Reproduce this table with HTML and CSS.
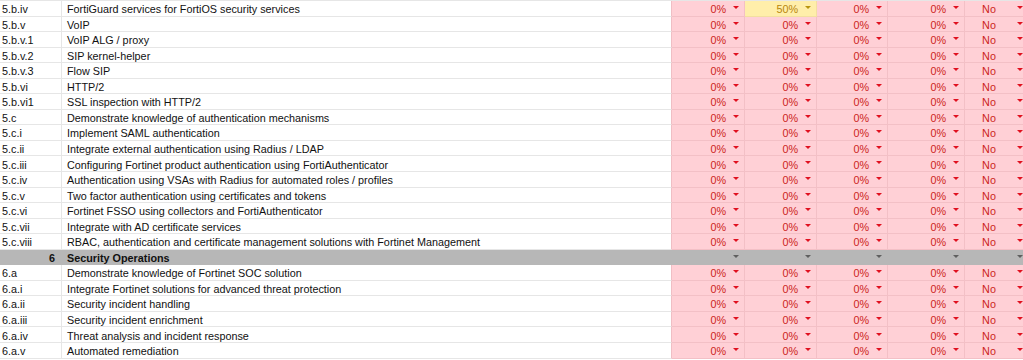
FILE: index.html
```html
<!DOCTYPE html>
<html lang="en">
<head>
    <meta charset="UTF-8">
    <title>Exam Objectives Tracker</title>
    <link rel="stylesheet" href="styles.css">
</head>
<body>
    <div class="sheet">
        <div class="row"><div class="cell code">5.b.iv</div><div class="cell topic">FortiGuard services for FortiOS security services</div><div class="cell pick"><span>0%</span><i class="caret"></i></div><div class="cell pick half"><span>50%</span><i class="caret"></i></div><div class="cell pick"><span>0%</span><i class="caret"></i></div><div class="cell pick"><span>0%</span><i class="caret"></i></div><div class="cell pick yn"><span>No</span><i class="caret"></i></div></div>
        <div class="row"><div class="cell code">5.b.v</div><div class="cell topic">VoIP</div><div class="cell pick"><span>0%</span><i class="caret"></i></div><div class="cell pick"><span>0%</span><i class="caret"></i></div><div class="cell pick"><span>0%</span><i class="caret"></i></div><div class="cell pick"><span>0%</span><i class="caret"></i></div><div class="cell pick yn"><span>No</span><i class="caret"></i></div></div>
        <div class="row"><div class="cell code">5.b.v.1</div><div class="cell topic">VoIP ALG / proxy</div><div class="cell pick"><span>0%</span><i class="caret"></i></div><div class="cell pick"><span>0%</span><i class="caret"></i></div><div class="cell pick"><span>0%</span><i class="caret"></i></div><div class="cell pick"><span>0%</span><i class="caret"></i></div><div class="cell pick yn"><span>No</span><i class="caret"></i></div></div>
        <div class="row"><div class="cell code">5.b.v.2</div><div class="cell topic">SIP kernel-helper</div><div class="cell pick"><span>0%</span><i class="caret"></i></div><div class="cell pick"><span>0%</span><i class="caret"></i></div><div class="cell pick"><span>0%</span><i class="caret"></i></div><div class="cell pick"><span>0%</span><i class="caret"></i></div><div class="cell pick yn"><span>No</span><i class="caret"></i></div></div>
        <div class="row"><div class="cell code">5.b.v.3</div><div class="cell topic">Flow SIP</div><div class="cell pick"><span>0%</span><i class="caret"></i></div><div class="cell pick"><span>0%</span><i class="caret"></i></div><div class="cell pick"><span>0%</span><i class="caret"></i></div><div class="cell pick"><span>0%</span><i class="caret"></i></div><div class="cell pick yn"><span>No</span><i class="caret"></i></div></div>
        <div class="row"><div class="cell code">5.b.vi</div><div class="cell topic">HTTP/2</div><div class="cell pick"><span>0%</span><i class="caret"></i></div><div class="cell pick"><span>0%</span><i class="caret"></i></div><div class="cell pick"><span>0%</span><i class="caret"></i></div><div class="cell pick"><span>0%</span><i class="caret"></i></div><div class="cell pick yn"><span>No</span><i class="caret"></i></div></div>
        <div class="row"><div class="cell code">5.b.vi1</div><div class="cell topic">SSL inspection with HTTP/2</div><div class="cell pick"><span>0%</span><i class="caret"></i></div><div class="cell pick"><span>0%</span><i class="caret"></i></div><div class="cell pick"><span>0%</span><i class="caret"></i></div><div class="cell pick"><span>0%</span><i class="caret"></i></div><div class="cell pick yn"><span>No</span><i class="caret"></i></div></div>
        <div class="row"><div class="cell code">5.c</div><div class="cell topic">Demonstrate knowledge of authentication mechanisms</div><div class="cell pick"><span>0%</span><i class="caret"></i></div><div class="cell pick"><span>0%</span><i class="caret"></i></div><div class="cell pick"><span>0%</span><i class="caret"></i></div><div class="cell pick"><span>0%</span><i class="caret"></i></div><div class="cell pick yn"><span>No</span><i class="caret"></i></div></div>
        <div class="row"><div class="cell code">5.c.i</div><div class="cell topic">Implement SAML authentication</div><div class="cell pick"><span>0%</span><i class="caret"></i></div><div class="cell pick"><span>0%</span><i class="caret"></i></div><div class="cell pick"><span>0%</span><i class="caret"></i></div><div class="cell pick"><span>0%</span><i class="caret"></i></div><div class="cell pick yn"><span>No</span><i class="caret"></i></div></div>
        <div class="row"><div class="cell code">5.c.ii</div><div class="cell topic">Integrate external authentication using Radius / LDAP</div><div class="cell pick"><span>0%</span><i class="caret"></i></div><div class="cell pick"><span>0%</span><i class="caret"></i></div><div class="cell pick"><span>0%</span><i class="caret"></i></div><div class="cell pick"><span>0%</span><i class="caret"></i></div><div class="cell pick yn"><span>No</span><i class="caret"></i></div></div>
        <div class="row"><div class="cell code">5.c.iii</div><div class="cell topic">Configuring Fortinet product authentication using FortiAuthenticator</div><div class="cell pick"><span>0%</span><i class="caret"></i></div><div class="cell pick"><span>0%</span><i class="caret"></i></div><div class="cell pick"><span>0%</span><i class="caret"></i></div><div class="cell pick"><span>0%</span><i class="caret"></i></div><div class="cell pick yn"><span>No</span><i class="caret"></i></div></div>
        <div class="row"><div class="cell code">5.c.iv</div><div class="cell topic">Authentication using VSAs with Radius for automated roles / profiles</div><div class="cell pick"><span>0%</span><i class="caret"></i></div><div class="cell pick"><span>0%</span><i class="caret"></i></div><div class="cell pick"><span>0%</span><i class="caret"></i></div><div class="cell pick"><span>0%</span><i class="caret"></i></div><div class="cell pick yn"><span>No</span><i class="caret"></i></div></div>
        <div class="row"><div class="cell code">5.c.v</div><div class="cell topic">Two factor authentication using certificates and tokens</div><div class="cell pick"><span>0%</span><i class="caret"></i></div><div class="cell pick"><span>0%</span><i class="caret"></i></div><div class="cell pick"><span>0%</span><i class="caret"></i></div><div class="cell pick"><span>0%</span><i class="caret"></i></div><div class="cell pick yn"><span>No</span><i class="caret"></i></div></div>
        <div class="row"><div class="cell code">5.c.vi</div><div class="cell topic">Fortinet FSSO using collectors and FortiAuthenticator</div><div class="cell pick"><span>0%</span><i class="caret"></i></div><div class="cell pick"><span>0%</span><i class="caret"></i></div><div class="cell pick"><span>0%</span><i class="caret"></i></div><div class="cell pick"><span>0%</span><i class="caret"></i></div><div class="cell pick yn"><span>No</span><i class="caret"></i></div></div>
        <div class="row"><div class="cell code">5.c.vii</div><div class="cell topic">Integrate with AD certificate services</div><div class="cell pick"><span>0%</span><i class="caret"></i></div><div class="cell pick"><span>0%</span><i class="caret"></i></div><div class="cell pick"><span>0%</span><i class="caret"></i></div><div class="cell pick"><span>0%</span><i class="caret"></i></div><div class="cell pick yn"><span>No</span><i class="caret"></i></div></div>
        <div class="row"><div class="cell code">5.c.viii</div><div class="cell topic">RBAC, authentication and certificate management solutions with Fortinet Management</div><div class="cell pick"><span>0%</span><i class="caret"></i></div><div class="cell pick"><span>0%</span><i class="caret"></i></div><div class="cell pick"><span>0%</span><i class="caret"></i></div><div class="cell pick"><span>0%</span><i class="caret"></i></div><div class="cell pick yn"><span>No</span><i class="caret"></i></div></div>
        <div class="row section"><div class="cell code">6</div><div class="cell topic">Security Operations</div><div class="cell pick"><span></span><i class="caret"></i></div><div class="cell pick"><span></span><i class="caret"></i></div><div class="cell pick"><span></span><i class="caret"></i></div><div class="cell pick"><span></span><i class="caret"></i></div><div class="cell pick yn"><span></span><i class="caret"></i></div></div>
        <div class="row"><div class="cell code">6.a</div><div class="cell topic">Demonstrate knowledge of Fortinet SOC solution</div><div class="cell pick"><span>0%</span><i class="caret"></i></div><div class="cell pick"><span>0%</span><i class="caret"></i></div><div class="cell pick"><span>0%</span><i class="caret"></i></div><div class="cell pick"><span>0%</span><i class="caret"></i></div><div class="cell pick yn"><span>No</span><i class="caret"></i></div></div>
        <div class="row"><div class="cell code">6.a.i</div><div class="cell topic">Integrate Fortinet solutions for advanced threat protection</div><div class="cell pick"><span>0%</span><i class="caret"></i></div><div class="cell pick"><span>0%</span><i class="caret"></i></div><div class="cell pick"><span>0%</span><i class="caret"></i></div><div class="cell pick"><span>0%</span><i class="caret"></i></div><div class="cell pick yn"><span>No</span><i class="caret"></i></div></div>
        <div class="row"><div class="cell code">6.a.ii</div><div class="cell topic">Security incident handling</div><div class="cell pick"><span>0%</span><i class="caret"></i></div><div class="cell pick"><span>0%</span><i class="caret"></i></div><div class="cell pick"><span>0%</span><i class="caret"></i></div><div class="cell pick"><span>0%</span><i class="caret"></i></div><div class="cell pick yn"><span>No</span><i class="caret"></i></div></div>
        <div class="row"><div class="cell code">6.a.iii</div><div class="cell topic">Security incident enrichment</div><div class="cell pick"><span>0%</span><i class="caret"></i></div><div class="cell pick"><span>0%</span><i class="caret"></i></div><div class="cell pick"><span>0%</span><i class="caret"></i></div><div class="cell pick"><span>0%</span><i class="caret"></i></div><div class="cell pick yn"><span>No</span><i class="caret"></i></div></div>
        <div class="row"><div class="cell code">6.a.iv</div><div class="cell topic">Threat analysis and incident response</div><div class="cell pick"><span>0%</span><i class="caret"></i></div><div class="cell pick"><span>0%</span><i class="caret"></i></div><div class="cell pick"><span>0%</span><i class="caret"></i></div><div class="cell pick"><span>0%</span><i class="caret"></i></div><div class="cell pick yn"><span>No</span><i class="caret"></i></div></div>
        <div class="row"><div class="cell code">6.a.v</div><div class="cell topic">Automated remediation</div><div class="cell pick"><span>0%</span><i class="caret"></i></div><div class="cell pick"><span>0%</span><i class="caret"></i></div><div class="cell pick"><span>0%</span><i class="caret"></i></div><div class="cell pick"><span>0%</span><i class="caret"></i></div><div class="cell pick yn"><span>No</span><i class="caret"></i></div></div>
    </div>
</body>
</html>
```
FILE: styles.css
```css
body {
    margin: 0;
    background: #ffffff;
    font-family: "Liberation Sans", Arial, sans-serif;
    font-size: 10.8px;
    color: #111111;
    overflow: hidden;
}
.sheet {
    width: 1023px;
    overflow: hidden;
    border-top: 1px solid #e6e6e6;
}
.row {
    display: grid;
    grid-template-columns: 62px 610px 73px 72px 71px 77px 64px;
    height: 15.56px;
}
.cell {
    box-sizing: border-box;
    border-right: 1px solid #e6e6e6;
    border-bottom: 1px solid #e6e6e6;
    line-height: 12px;
    padding-bottom: 0.5px;
    white-space: nowrap;
    overflow: hidden;
    display: flex;
    align-items: flex-end;
}
.code {
    padding-left: 2px;
}
.topic {
    padding-left: 5px;
    border-right-color: #f0bec4;
}
.pick {
    background: #ffd0d6;
    color: #cc1f1a;
    border-color: #f3c0c6;
    justify-content: flex-end;
    padding-right: 5px;
}
.pick span {
    margin-right: 7px;
}
.caret {
    align-self: center;
    width: 0;
    height: 0;
    border-left: 3px solid transparent;
    border-right: 3px solid transparent;
    border-top: 3px solid #e0101f;
    margin-bottom: 1px;
}
.pick.half {
    background: #ffeeaa;
    color: #b8860b;
    border-color: #f3dfa0;
}
.pick.half .caret {
    border-top-color: #b8940f;
}
.pick.yn {
    justify-content: space-between;
}
.pick.yn span {
    flex: 1;
    text-align: center;
    margin-right: 4px;
}
.section .cell {
    background: #b7b7b7;
    border-color: #b7b7b7;
    font-weight: bold;
}
.section .code {
    justify-content: flex-end;
    padding-right: 6px;
}
.section .caret {
    border-top-color: #5f5f5f;
}
```
